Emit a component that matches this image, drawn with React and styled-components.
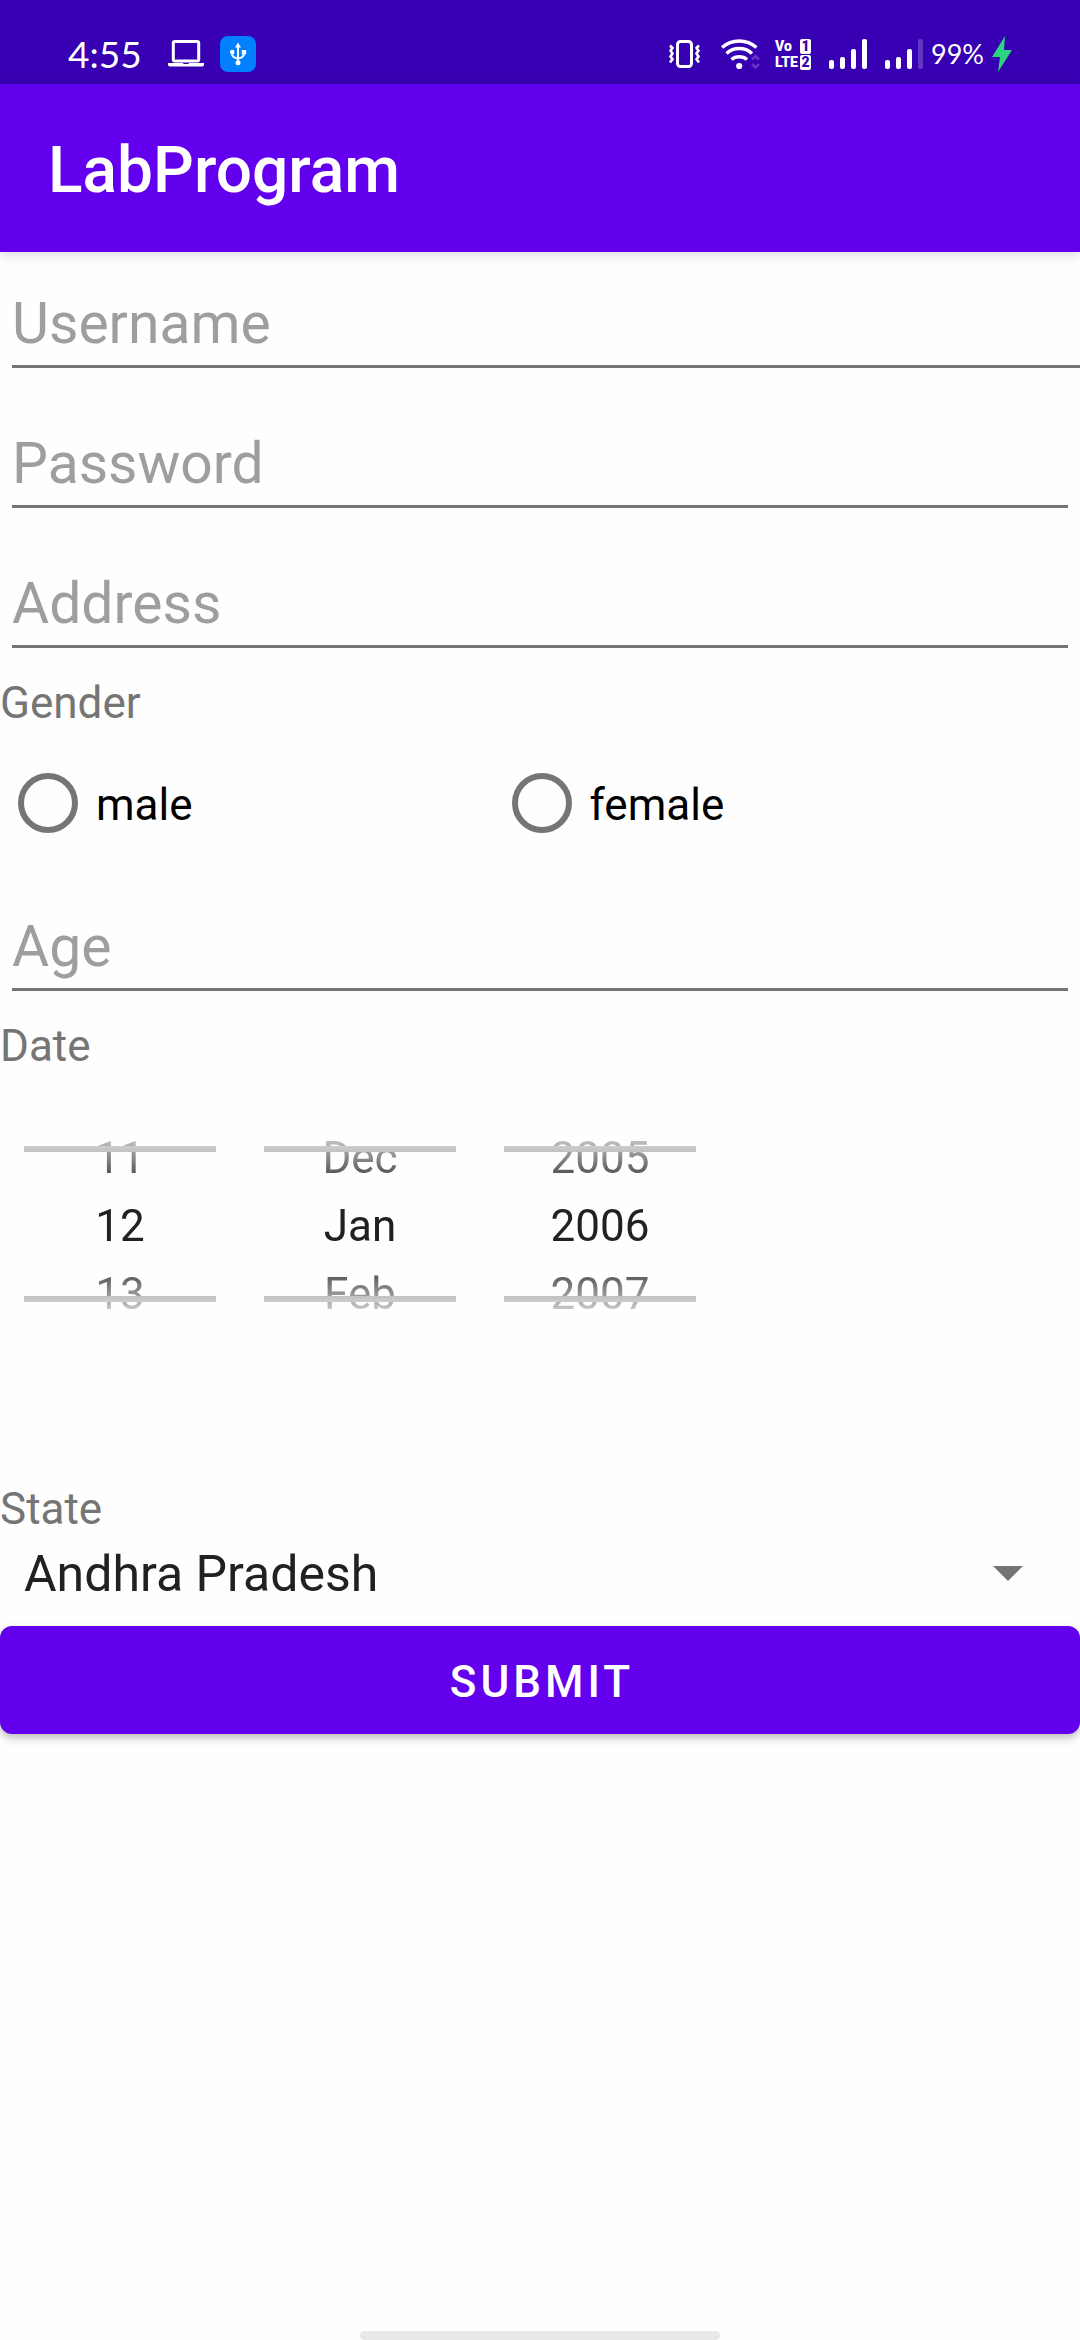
import React, { useState } from "react";
import styled, { createGlobalStyle } from "styled-components";

const GlobalStyle = createGlobalStyle`
  *, *::before, *::after { box-sizing: border-box; }
  body {
    margin: 0;
    background: #fefefe;
    color: #212121;
    font-family: Roboto, "Noto Sans", sans-serif;
  }
  input, select, button { font-family: inherit; }
`;

const Screen = styled.div`
  min-height: 100vh;
  display: flex;
  flex-direction: column;
`;

const StatusBar = styled.header`
  height: 84px;
  padding: 24px 68px 0;
  display: flex;
  justify-content: space-between;
  align-items: center;
  background: #3700b3;
  color: #fff;
  font-family: Lato, sans-serif;
`;

const StatusGroup = styled.div`
  display: flex;
  align-items: center;
  gap: ${(p) => p.$gap}px;
`;

const Clock = styled.time`
  font-size: 37px;
  line-height: 60px;
  margin-right: 10px;
`;

const Percent = styled.span`
  font-size: 27px;
  line-height: 60px;
`;

const Icon = styled.svg`
  display: block;
  flex: none;
  overflow: visible;
`;

const Volte = styled.div`
  width: 36px;
  display: grid;
  grid-template-columns: 23px 11px;
  gap: 1px 2px;
  font-family: "Liberation Sans Narrow", Roboto, sans-serif;
  font-size: 14px;
  font-weight: 900;
  line-height: 15px;
`;

const SimBadge = styled.span`
  border-radius: 2px;
  background: #fff;
  color: #3700b3;
  text-align: center;
`;

const AppBar = styled.div`
  height: 168px;
  padding: 6px 48px 0;
  display: flex;
  align-items: center;
  background: #6200ee;
  color: #fff;
  box-shadow: 0 3px 12px rgba(0, 0, 0, 0.14);
`;

const Title = styled.h1`
  margin: 0;
  font-size: 64px;
  line-height: 76px;
  font-weight: 500;
`;

const Form = styled.form`
  display: flex;
  flex-direction: column;
  flex: 1;
`;

const Field = styled.label`
  display: block;
  height: 140px;
  padding: ${(p) => (p.$flush ? "24px 0 0 12px" : "24px 12px 0")};
`;

const TextInput = styled.input`
  display: block;
  width: 100%;
  height: 92px;
  padding: 6px 0 0;
  border: 0;
  border-bottom: 3px solid #757575;
  border-radius: 0;
  outline: 0;
  background: transparent;
  color: #212121;
  font-size: 57px;
  &::placeholder { color: #9e9e9e; opacity: 1; }
`;

const Caption = styled.div`
  padding: 4px 0 0;
  font-size: 44px;
  line-height: 55px;
  color: #757575;
`;

const RadioRow = styled.fieldset`
  margin: 0;
  padding: 0;
  border: 0;
  min-width: 0;
`;

const Options = styled.div`
  height: 144px;
  display: flex;
  align-items: center;
  gap: 301px;
`;

const Option = styled.label`
  display: flex;
  align-items: center;
  gap: 18px;
  padding-left: 18px;
  color: #000;
`;

const OptionText = styled.span`
  padding-top: 4px;
  font-size: 44px;
  line-height: 55px;
`;

const Radio = styled.input`
  appearance: none;
  width: 60px;
  height: 60px;
  margin: 0;
  border: 6px solid #757575;
  border-radius: 50%;
  &:checked { background: radial-gradient(#6200ee 48%, transparent 52%); border-color: #6200ee; }
`;

const DatePicker = styled.div`
  height: 404px;
  padding: 48px 24px 0;
  display: flex;
  align-items: flex-start;
  gap: 48px;
`;

const Wheel = styled.div`
  position: relative;
  width: 192px;
  height: 204px;
  padding-top: 2px;
  mask-image: linear-gradient(transparent, #000 68px, #000 136px, transparent);
  &::after {
    content: "";
    position: absolute;
    inset: 24px 0;
    border: solid #757575;
    border-width: 6px 0;
    pointer-events: none;
  }
`;

const WheelItem = styled.div`
  height: 68px;
  text-align: center;
  font-size: 44px;
  line-height: 68px;
  color: #212121;
`;

const SelectBox = styled.div`
  height: 73px;
  margin-bottom: 16px;
  padding-right: 57px;
  display: grid;
  align-items: center;
`;

const Select = styled.select`
  grid-area: 1 / 1;
  width: 100%;
  height: 60px;
  padding: 0 24px;
  border: 0;
  outline: 0;
  appearance: none;
  background: transparent;
  color: #212121;
  font-size: 50px;
  line-height: 60px;
`;

const Arrow = styled(Icon)`
  grid-area: 1 / 1;
  justify-self: end;
  pointer-events: none;
`;

const Submit = styled.button`
  height: 108px;
  padding: 4px 0 0 4px;
  border: 0;
  border-radius: 12px;
  background: #6200ee;
  color: #fff;
  font-size: 44px;
  font-weight: 500;
  letter-spacing: 4px;
  box-shadow: 0 4px 8px rgba(0, 0, 0, 0.26);
`;

const HomeHandle = styled.div`
  width: 360px;
  height: 9px;
  margin: 0 auto;
  border-radius: 5px;
  background: #e8e8e8;
`;

const fields = ["Username", "Password", "Address"];
const wheels = [
  ["11", "12", "13"],
  ["Dec", "Jan", "Feb"],
  ["2005", "2006", "2007"],
];

function TextField({ name, type = "text", flush }) {
  return (
    <Field $flush={flush}>
      <TextInput aria-label={name} placeholder={name} type={type} />
    </Field>
  );
}

function LaptopIcon() {
  return (
    <Icon width="36" height="28" viewBox="0 0 36 28" fill="none">
      <rect x="5.300" y="1.500" width="25.400" height="19.500" rx="1.500" stroke="#fff" strokeWidth="3" />
      <path d="M0 23h15q0 1 1 1h4q1 0 1-1h15v1.500q0 2-2 2h-32Q0 26.500 0 24.500z" fill="#fff" />
    </Icon>
  );
}

function UsbIcon() {
  return (
    <Icon width="36" height="36" viewBox="0 0 36 36" fill="none">
      <rect width="36" height="36" rx="8" fill="#007fff" />
      <path d="M18 9v18M12 17q0 5 6 5.500q6-.5 6-5.500" stroke="#fff" strokeWidth="2" />
      <path d="M18 6.500l3 5h-6z" fill="#fff" />
      <circle cx="12.200" cy="16" r="2.300" fill="#fff" />
      <rect x="21.800" y="14" width="4.400" height="4.400" fill="#fff" />
      <circle cx="18" cy="26.700" r="2.500" fill="#fff" />
    </Icon>
  );
}

function VibrateIcon() {
  return (
    <Icon width="34" height="28" viewBox="0 0 34 28" fill="none" stroke="#fff">
      <rect x="8.500" y="1.500" width="14" height="25" rx="3" strokeWidth="3" />
      <path d="M1 5.500l2.500 2.500-2 2.800 2 2.800-2 2.800 2 2.800L1 22.500" strokeWidth="2.600" />
      <path d="M30 5.500l-2.500 2.500 2 2.800-2 2.800 2 2.800-2 2.800 2.500 3.300" strokeWidth="2.600" />
    </Icon>
  );
}

function WifiIcon() {
  return (
    <Icon width="36" height="30" viewBox="0 0 36 30" fill="none" stroke="#fff" strokeWidth="3.500">
      <path d="M1 8.500A26 26 0 0 1 35.500 8.500" />
      <path d="M5.500 14.500A19 19 0 0 1 31 14.500" />
      <path d="M10.500 20.500A12 12 0 0 1 26 20.500" />
      <circle cx="18.200" cy="27" r="3.100" fill="#fff" stroke="none" />
      <path d="M31 20.500l3.500-3.500 3.500 3.500M31 25l3.500 3.500 3.500-3.500" stroke="#6236c8" strokeWidth="2.600" />
    </Icon>
  );
}

function VolteIcon() {
  return (
    <Volte>
      <span>Vo</span>
      <SimBadge>1</SimBadge>
      <span>LTE</span>
      <SimBadge>2</SimBadge>
    </Volte>
  );
}

function SignalIcon({ weak }) {
  return (
    <Icon width="38" height="30" viewBox="0 0 38 30" fill="#fff">
      <rect x="0" y="21" width="5" height="9" rx="2" />
      <rect x="11" y="18" width="5" height="12" rx="2" />
      <rect x="22" y="10" width="5" height="20" rx="2" />
      <rect x="33" y="0" width="5" height="30" rx="2" fillOpacity={weak ? 0.22 : 1} />
    </Icon>
  );
}

function BoltIcon() {
  return (
    <Icon width="20" height="36" viewBox="0 0 20 36">
      <path d="M13 0L0 21h8L6 36 20 14h-8z" fill="#2bd47d" />
    </Icon>
  );
}

export default function App() {
  const [gender, setGender] = useState("");
  return (
    <Screen>
      <GlobalStyle />
      <StatusBar>
        <StatusGroup $gap={16}>
          <Clock>4:55</Clock>
          <LaptopIcon />
          <UsbIcon />
        </StatusGroup>
        <StatusGroup $gap={18}>
          <VibrateIcon />
          <WifiIcon />
          <VolteIcon />
          <SignalIcon />
          <StatusGroup $gap={8}>
            <SignalIcon weak />
            <Percent>99%</Percent>
            <BoltIcon />
          </StatusGroup>
        </StatusGroup>
      </StatusBar>
      <AppBar>
        <Title>LabProgram</Title>
      </AppBar>
      <Form onSubmit={(e) => e.preventDefault()}>
        {fields.map((name, i) => (
          <TextField key={name} name={name} flush={i === 0} type={name === "Password" ? "password" : "text"} />
        ))}
        <RadioRow>
          <Caption as="legend">Gender</Caption>
          <Options>
            {["male", "female"].map((value) => (
              <Option key={value}>
                <Radio
                  type="radio"
                  name="gender"
                  checked={gender === value}
                  onChange={() => setGender(value)}
                />
                <OptionText>{value}</OptionText>
              </Option>
            ))}
          </Options>
        </RadioRow>
        <TextField name="Age" />
        <Caption>Date</Caption>
        <DatePicker>
          {wheels.map((items) => (
            <Wheel key={items[1]}>
              {items.map((item) => (
                <WheelItem key={item}>{item}</WheelItem>
              ))}
            </Wheel>
          ))}
        </DatePicker>
        <Caption as="label" htmlFor="state">State</Caption>
        <SelectBox>
          <Select id="state" defaultValue="Andhra Pradesh">
            <option>Andhra Pradesh</option>
          </Select>
          <Arrow width="30" height="15" viewBox="0 0 30 15">
            <path d="M0 0h30L15 15z" fill="#757575" />
          </Arrow>
        </SelectBox>
        <Submit type="submit">SUBMIT</Submit>
      </Form>
      <HomeHandle />
    </Screen>
  );
}
